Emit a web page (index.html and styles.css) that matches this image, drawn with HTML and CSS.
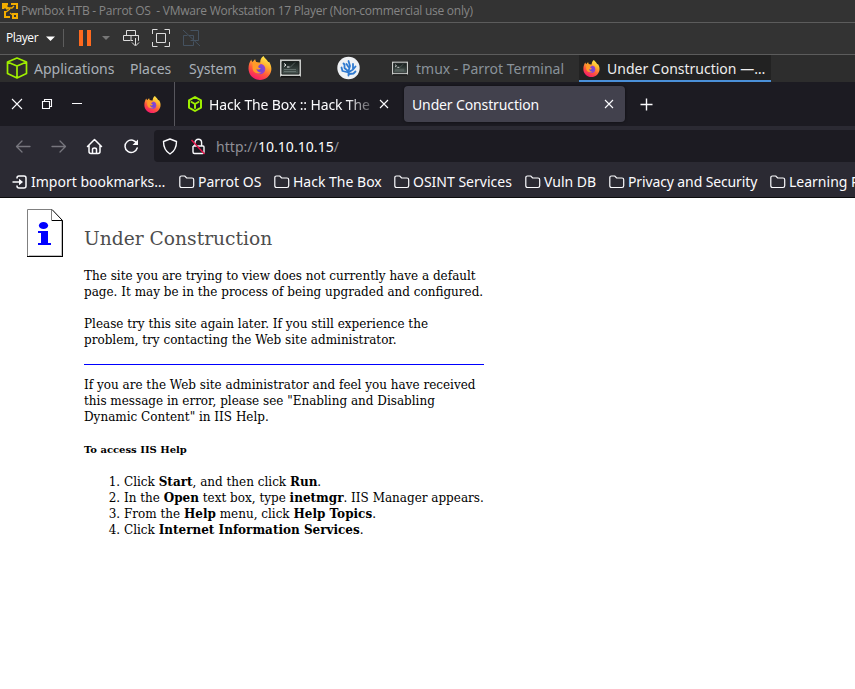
FILE: index.html
```html
<!DOCTYPE html>
<html lang="en">
<head>
<meta charset="utf-8">
<title>Under Construction</title>
<link rel="stylesheet" href="styles.css">
</head>
<body>
<svg class="defs" width="0" height="0">
  <defs>
    <linearGradient id="flame" x1=".8" y1="0" x2=".3" y2="1"><stop offset="0" stop-color="#fff44f"/><stop offset=".35" stop-color="#ffb02e"/><stop offset=".65" stop-color="#ff5a3c"/><stop offset="1" stop-color="#f5156c"/></linearGradient>
    <radialGradient id="globe"><stop offset="0" stop-color="#5b4de0"/><stop offset="1" stop-color="#9b41c8"/></radialGradient>
    <linearGradient id="screen" x1="0" y1="0" x2="0" y2="1"><stop offset="0" stop-color="#151c1b"/><stop offset="1" stop-color="#4c5955"/></linearGradient>
  </defs>
  <symbol id="firefox" viewBox="0 0 24 24"><path fill="url(#flame)" d="M15.500 0c1 2 3.200 3.200 4.400 5.500.4.700.8.600 1.200.2 1.800 2.600 2.700 6 2.100 9C22.100 20 17.500 24 12 24 5.600 24 .5 19 .5 12.600c0-3.800 1-6.800 2.800-9.200.2 1.200.6 2 1.400 2.600C5.600 4.600 6.600 3.500 7.300 3.200c0 1.400.5 2.500 1.500 3.300h3.400c0-2.600 1-5.200 3.300-6.500z"/><circle cx="12" cy="13" r="5.300" fill="url(#globe)"/><path fill="#ff9b28" d="M4.500 6.300c2-1 4.200-.8 5.600.4l3 .6c-.3 1.500-2.400 1.600-2.900 3.100 0 1.300 1.300 1.600 2.500 1.500-.8 2.200-3.600 1.800-4.300.6.300 3 2.600 4.300 5 4-2.300 2-8.400 1-8.900-4z"/></symbol>
  <symbol id="terminal" viewBox="0 0 21 18"><path fill="#c8cac8" d="M0 0h21v17H0z"/><path fill="#111" d="M1 16.500h19V18H1z"/><path fill="url(#screen)" stroke="#202423" d="M2 2h17v12.500H2z"/><path d="M4 4l2 1.500L4 7M7 7.500h2.500" fill="none" stroke="#f0f0f0"/><path d="M10 8l5-5M4 10h12M4 12h12" stroke="#899692" stroke-width=".5"/></symbol>
  <symbol id="cube" viewBox="0 0 22 22"><path d="M11 1l9.500 4v11.500L11 21l-9.500-4.500V5zM1.500 5L11 9l9.500-4M11 9v12" fill="none" stroke="#9fef00" stroke-width="1.700" stroke-linejoin="round"/></symbol>
  <symbol id="box" viewBox="0 0 16 16"><path d="M8 1l6 3.400v7.200L8 15l-6-3.400V4.400zM4.500 6L8 8l3.500-2M8 8v4" fill="none" stroke="#9fef00" stroke-width="2" stroke-linejoin="round" stroke-linecap="round"/></symbol>
  <symbol id="folder" viewBox="0 0 16 14"><path d="M2.500 1h3.300L7.600 3H13q1.700 0 1.700 1.700v6.100q0 1.700-1.700 1.700H2.500q-1.700 0-1.700-1.700V2.700Q.8 1 2.500 1z" fill="none" stroke="#fbfbfe" stroke-width="1.200"/></symbol>
  <symbol id="close" viewBox="0 0 10 10"><path d="M1 1l8 8M9 1L1 9" fill="none" stroke="#fbfbfe" stroke-width="1.100"/></symbol>
</svg>

<header class="vm-title">
  <svg class="vm-logo" viewBox="0 0 16 16"><path d="M0 0h6v2l-1 1 2 2-2 2-2-2-1 1H0zM9 0h7v6h-2V2H9zM2 8h2v5h4v2H2zM10 15v-5h6v6h-6z" fill="#f2ad00"/><path d="M6 5h4l2-2M4 9l4-3M8 10l4 3" fill="none" stroke="#f2ad00" stroke-width="1.300"/><path d="M12 12h2v2h-2z" fill="#333"/></svg>
  <span class="t-title">Pwnbox HTB - Parrot OS&nbsp; - VMware Workstation 17 Player (Non-commercial use only)</span>
</header>

<div class="vm-bar">
  <span class="t-player">Player</span>
  <svg class="vm-icons" width="160" height="30" viewBox="44 23 160 30">
    <path d="M46 36.500h9l-4.500 4.500z" fill="#fff"/>
    <path d="M63.500 29v18" stroke="#5d5d5d"/>
    <path d="M79 30h4v16h-4zM87 30h4v16h-4z" fill="#ff6a1f"/>
    <path d="M102 36h8l-4 4z" fill="#777"/>
    <g fill="none" stroke="#ddd"><path d="M126.500 30.500h9v5h-9zM130.500 40.500h-7v-5h15v5M131 35.500v5h2M138.500 35.500v5M135.500 38v7M132 42.500l3.500 3.500 3.500-3.500"/>
    <path d="M152.500 34v-4.500h5M164.500 29.500h5V34M169.500 42v4.500h-5M157.500 46.500h-5V42M156.500 33.500h9v9h-9z"/></g>
    <g fill="none" stroke="#455260"><path d="M190.500 30.500h8v10h-8M187.500 35.500h-4v10h10v-4M189 35.500h4.500V40M183 30l17 16"/></g>
  </svg>
</div>

<nav class="panel">
  <div class="slot s-apps"><svg width="22" height="22"><use href="#cube"/></svg><span class="t-apps">Applications</span></div>
  <div class="slot s-places"><span class="t-places">Places</span></div>
  <div class="slot s-system"><span class="t-system">System</span></div>
  <div class="slot s-launch"><svg width="24" height="24"><use href="#firefox"/></svg><svg width="21" height="19"><use href="#terminal"/></svg></div>
  <div class="slot s-codium"><svg width="23" height="24" viewBox="0 0 23 24"><circle cx="11.500" cy="12" r="11.200" fill="#eef1f4"/><g fill="none" stroke="#2f7ad0" stroke-width="1.800" stroke-linecap="round" stroke-linejoin="round"><path d="M11.500 19.500v-4L7.500 12V8.500l-1-1M4.500 11.500l1 3.500 6 1.500M11.500 15l1.500-5-1.500-5M9.500 8l2 3M12 16l4-2.500V8M18.500 10.500l-2.500 3M12 18l4.500-.5 2-2"/></g></svg></div>
  <div class="slot s-tmux"><svg width="16" height="15"><use href="#terminal"/></svg><span class="t-tmux">tmux - Parrot Terminal</span></div>
  <div class="slot s-task"><svg width="17" height="17"><use href="#firefox"/></svg><span class="t-task">Under Construction <span class="dash">—</span>…</span></div>
</nav>

<div class="tabs">
  <div class="window-controls">
    <svg width="90" height="44" viewBox="0 82 90 44"><g fill="none" stroke="#fbfbfe" stroke-width="1.100"><path d="M12 99l10 10M22 99l-10 10"/><path d="M42.500 101.500h7v7h-7zM44.500 101v-1.500h7v7H50M72 103.500h10"/></g></svg>
    <svg class="ff" width="17" height="17"><use href="#firefox"/></svg>
  </div>
  <div class="tab tab-htb"><svg width="16" height="16"><use href="#box"/></svg><span class="clip"><span class="t-htb">Hack The Box :: Hack The B</span></span><svg width="10" height="10"><use href="#close"/></svg></div>
  <div class="tab tab-active"><span class="t-uc">Under Construction</span><svg width="10" height="10"><use href="#close"/></svg></div>
  <svg class="plus" width="13" height="13" viewBox="0 0 13 13"><path d="M6.500.5v12M.5 6.500h12" stroke="#fbfbfe" stroke-width="1.400"/></svg>
</div>

<div class="navbar">
  <svg class="nav-icons" width="154" height="36" viewBox="0 126 154 36">
    <g fill="none" stroke="#77767e" stroke-width="1.300" stroke-linecap="round" stroke-linejoin="round"><path d="M30 146.500H17M22 141l-5.500 5.500L22 152M52 146.500h13M60 141l5.500 5.500L60 152"/></g>
    <g fill="none" stroke="#fbfbfe" stroke-width="1.500" stroke-linecap="round" stroke-linejoin="round"><path d="M87.500 146.500l7-7 7 7M89 145.500v6q0 2 2 2h7q2 0 2-2v-6M92.500 153v-3.500q0-1.500 2-1.500t2 1.500v3.500"/><path d="M137 144a6.200 6.200 0 1 0 .2 4"/></g><path d="M138 139.500v5.500h-5.500z" fill="#fbfbfe"/>
  </svg>
  <div class="url">
    <svg width="62" height="32" viewBox="154 130 62 32"><g fill="none" stroke="#fbfbfe" stroke-width="1.400" stroke-linejoin="round"><path d="M170 139l6.500 2.500c0 6-1.500 9.500-6.500 12.500-5-3-6.500-6.500-6.500-12.500z"/><path d="M193 146h10q1 0 1 1v5q0 1.500-1.500 1.500h-8q-1.500 0-1.500-1.500v-6M195 146v-3.500a3.300 3.300 0 0 1 6.600 0V146"/></g><path d="M191.500 140l13 14" stroke="#e6124a" stroke-width="1.400"/></svg>
    <span class="t-url">http://<b>10.10.10.15</b>/</span>
  </div>
</div>

<div class="bookmarks">
  <div class="bm b1"><svg width="16" height="14" viewBox="0 0 16 14"><path d="M5 3.500V3q0-2 2-2h5q2 0 2 2v8q0 2-2 2H7q-2 0-2-2v-.5M.5 7h8" fill="none" stroke="#fbfbfe" stroke-width="1.500"/><path d="M7 3.700L11 7l-4 3.300z" fill="#fbfbfe"/></svg><span class="t-b1">Import bookmarks…</span></div>
  <div class="bm b2"><svg width="16" height="14"><use href="#folder"/></svg><span class="t-b2">Parrot OS</span></div>
  <div class="bm b3"><svg width="16" height="14"><use href="#folder"/></svg><span class="t-b3">Hack The Box</span></div>
  <div class="bm b4"><svg width="16" height="14"><use href="#folder"/></svg><span class="t-b4">OSINT Services</span></div>
  <div class="bm b5"><svg width="16" height="14"><use href="#folder"/></svg><span class="t-b5">Vuln DB</span></div>
  <div class="bm b6"><svg width="16" height="14"><use href="#folder"/></svg><span class="t-b6">Privacy and Security</span></div>
  <div class="bm b7"><svg width="16" height="14"><use href="#folder"/></svg><span class="t-b7">Learning R</span></div>
</div>

<main class="page">
  <svg class="info" width="36" height="48" viewBox="0 0 36 48"><path d="M.5 47V.5H25" fill="none" stroke="#808080"/><path d="M2 46.500h33M34.500 12v34" stroke="#c0c0c0"/><path d="M0 47.500h36M35.500 11v37" stroke="#000"/><path d="M24.500 0v11.500H36" fill="none" stroke="#808080"/><path d="M25 .5l10.500 11H25" fill="none" stroke="#000"/><ellipse cx="16.500" cy="16.500" rx="4.600" ry="3.600" fill="#00f"/><path d="M11 22h10v12h3v2H11v-2h3V24h-3z" fill="#00f"/></svg>
  <div class="copy">
    <h1>Under Construction</h1>
    <p>The site you are trying to view does not currently have a default<br>page. It may be in the process of being upgraded and configured.</p>
    <p>Please try this site again later. If you still experience the<br>problem, try contacting the Web site administrator.</p>
    <hr>
    <p>If you are the Web site administrator and feel you have received<br>this message in error, please see "Enabling and Disabling<br>Dynamic Content" in IIS Help.</p>
    <h5>To access IIS Help</h5>
    <ol>
      <li>Click <b>Start</b>, and then click <b>Run</b>.</li>
      <li>In the <b>Open</b> text box, type <b>inetmgr</b>. IIS Manager appears.</li>
      <li>From the <b>Help</b> menu, click <b>Help Topics</b>.</li>
      <li>Click <b>Internet Information Services</b>.</li>
    </ol>
  </div>
</main>
</body>
</html>
```
FILE: styles.css
```css
* { box-sizing: border-box; }
body { margin: 0; width: 855px; height: 689px; overflow: hidden; background: #fff; font-family: "Noto Sans", sans-serif; font-size: 14px; white-space: nowrap; }
svg { display: block; flex: none; }
.defs { position: absolute; }
.vm-title { height: 23px; background: #333; border-bottom: 1px solid #5c5c5c; display: flex; align-items: center; padding: 0 0 1px 2px; gap: 3px; color: #858585; font-family: "Open Sans", sans-serif; font-size: 12px; letter-spacing: -.26px; }
.vm-logo { width: 16px; height: 16px; }
.vm-bar { height: 32px; background: #333; border-bottom: 1px solid #5c5c5c; display: flex; align-items: center; padding: 0 0 2px 6px; color: #fff; font-family: "Open Sans", sans-serif; font-size: 12px; }
.t-player { width: 38px; letter-spacing: -.4px; }
.panel { height: 27px; background: #2d2d2d; display: flex; color: #a9b0b8; }
.slot { display: flex; align-items: center; flex: none; padding-bottom: 1px; }
.s-apps { width: 130px; padding-left: 6px; gap: 6px; }
.s-places { width: 59px; }
.s-system { width: 59px; }
.s-launch { width: 89px; gap: 8px; }
.s-codium { width: 55px; }
.s-tmux { width: 187px; gap: 8px; color: #89929a; }
.s-task { width: 192px; padding: 1px 0 0 4px; gap: 7px; color: #eee; background: #222; border-bottom: 2px solid #4a90d9; }
.tabs { height: 44px; background: #1c1b22; display: flex; align-items: center; color: #fbfbfe; }
.window-controls { width: 175px; height: 44px; display: flex; align-items: center; border-right: 1px solid #57565d; }
.ff { margin-left: 54px; }
.tab { height: 36px; display: flex; align-items: center; flex: none; letter-spacing: -.13px; }
.tab-htb { width: 229px; padding-left: 12px; gap: 6px; }
.clip { width: 164px; overflow: hidden; mask-image: linear-gradient(90deg, #000 138px, transparent 170px); }
.tab-active { width: 221px; background: #42414d; border-radius: 4px; padding: 0 11px 0 8px; justify-content: space-between; box-shadow: 0 0 3px #0008; }
.plus { margin-left: 15px; }
.navbar { height: 36px; background: #2b2a33; display: flex; align-items: flex-end; }
.nav-icons { align-self: flex-start; }
.url { width: 701px; height: 32px; background: #1c1b22; border-radius: 4px 0 0 4px; display: flex; align-items: center; color: #8f8f96; }
.t-url { letter-spacing: .05px; }
.url b { color: #fbfbfe; font-weight: 400; }
.bookmarks { height: 36px; background: #2b2a33; border-bottom: 1px solid #0c0c0d; display: flex; align-items: center; padding: 4px 0 0 12px; color: #fbfbfe; overflow: hidden; }
.bm { display: flex; align-items: center; gap: 3px; flex: none; }
.b1 { width: 167px; }
.b2 { width: 95px; }
.b3 { width: 120px; }
.b4 { width: 131px; }
.b5 { width: 84px; }
.b6 { width: 161px; letter-spacing: -.12px; }
.page { display: flex; align-items: flex-start; gap: 21px; padding: 11px 0 0 27px; font: 12px/16px "DejaVu Serif", serif; color: #000; }
.copy { width: 400px; padding-top: 18px; }
h1 { margin: 0 0 18px; font: 18.667px/23px "DejaVu Serif", serif; color: #4d4d4d; }
p { margin: 0 0 16px; }
hr { border: 0; height: 1px; margin: 0 0 12px; background: #00f; }
h5 { margin: 0 0 16px; font: bold 10px/17px "DejaVu Serif", serif; }
ol { margin: 0; padding-left: 40px; }
```
